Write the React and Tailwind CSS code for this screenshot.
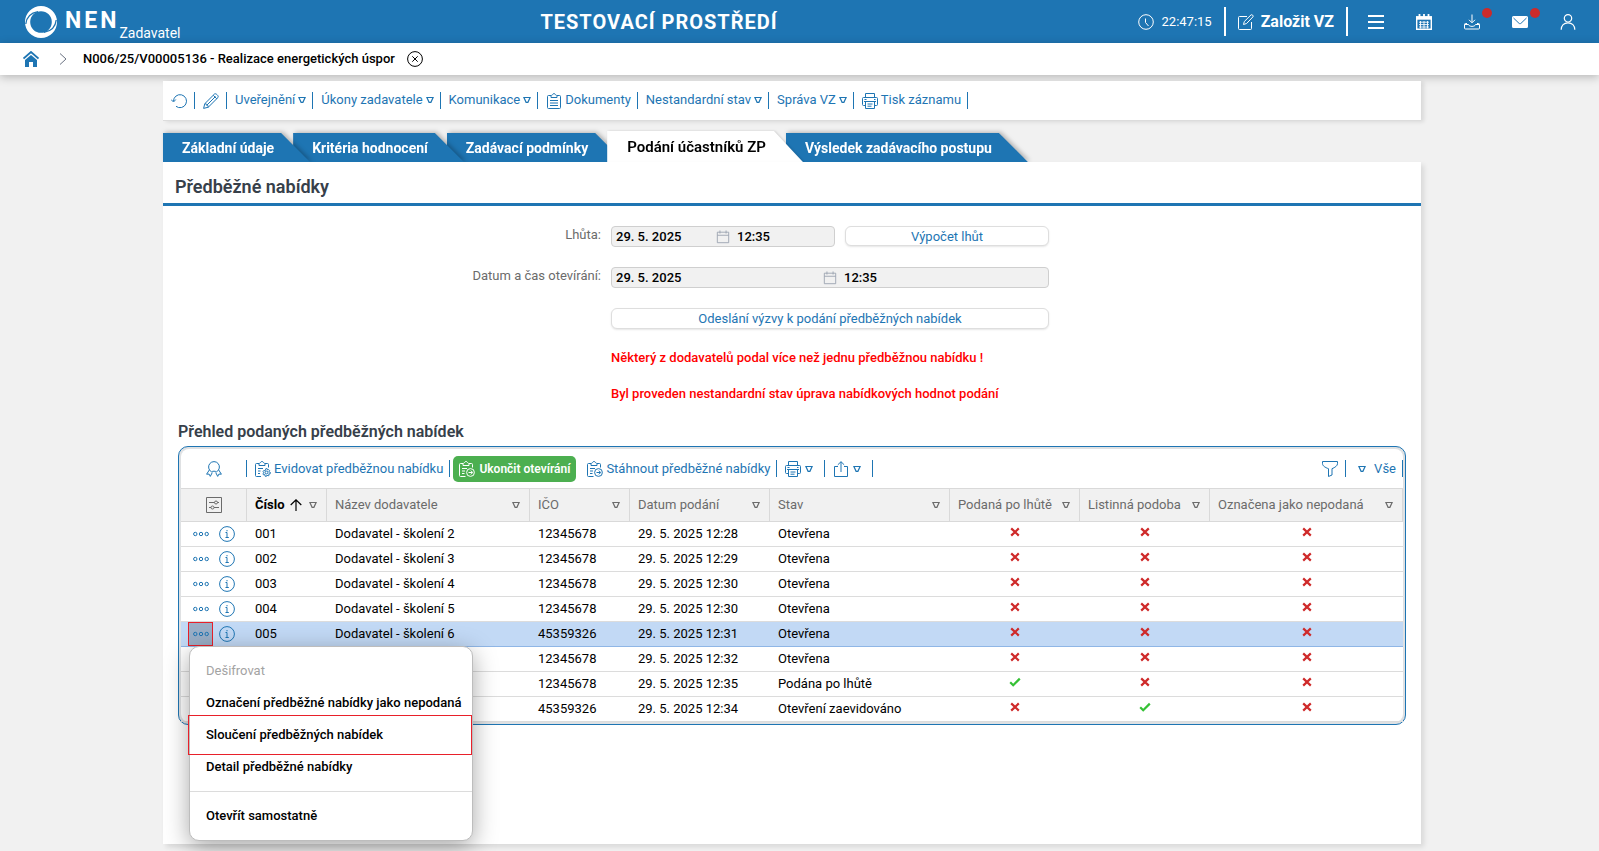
import { useState } from 'react';

const tabs = [
  { id: 'basic', label: 'Základní údaje', order: 'z-[5]' },
  { id: 'criteria', label: 'Kritéria hodnocení', order: 'z-[4]' },
  { id: 'terms', label: 'Zadávací podmínky', order: 'z-[3]' },
  { id: 'bids', label: 'Podání účastníků ZP', order: 'z-[2]' },
  { id: 'result', label: 'Výsledek zadávacího postupu', order: 'z-[1]' },
];

const actions = [
  { label: 'Uveřejnění', menu: true },
  { label: 'Úkony zadavatele', menu: true },
  { label: 'Komunikace', menu: true },
  { label: 'Dokumenty', icon: ClipboardIcon },
  { label: 'Nestandardní stav', menu: true },
  { label: 'Správa VZ', menu: true },
  { label: 'Tisk záznamu', icon: PrinterIcon },
];

const columns = [
  { label: 'Název dodavatele', width: 'w-[203px]' },
  { label: 'IČO', width: 'w-[100px]' },
  { label: 'Datum podání', width: 'w-[140px]' },
  { label: 'Stav', width: 'w-[180px]' },
  { label: 'Podaná po lhůtě', width: 'w-[130px]' },
  { label: 'Listinná podoba', width: 'w-[130px]' },
  { label: 'Označena jako nepodaná', width: '' },
];

const rows = [
  { no: '001', name: 'Dodavatel - školení 2', ico: '12345678', date: '29. 5. 2025 12:28', state: 'Otevřena', flags: [false, false, false] },
  { no: '002', name: 'Dodavatel - školení 3', ico: '12345678', date: '29. 5. 2025 12:29', state: 'Otevřena', flags: [false, false, false] },
  { no: '003', name: 'Dodavatel - školení 4', ico: '12345678', date: '29. 5. 2025 12:30', state: 'Otevřena', flags: [false, false, false] },
  { no: '004', name: 'Dodavatel - školení 5', ico: '12345678', date: '29. 5. 2025 12:30', state: 'Otevřena', flags: [false, false, false] },
  { no: '005', name: 'Dodavatel - školení 6', ico: '45359326', date: '29. 5. 2025 12:31', state: 'Otevřena', flags: [false, false, false] },
  { no: '', name: '', ico: '12345678', date: '29. 5. 2025 12:32', state: 'Otevřena', flags: [false, false, false] },
  { no: '', name: '', ico: '12345678', date: '29. 5. 2025 12:35', state: 'Podána po lhůtě', flags: [true, false, false] },
  { no: '', name: '', ico: '45359326', date: '29. 5. 2025 12:34', state: 'Otevření zaevidováno', flags: [false, true, false] },
];

function Icon({ children, className = 'size-4' }) {
  return (
    <svg viewBox="0 0 16 16" fill="none" stroke="currentColor" strokeWidth="1" className={`shrink-0 ${className}`} aria-hidden="true">
      {children}
    </svg>
  );
}

function Triangle({ className = '' }) {
  return (
    <svg viewBox="0 0 8 8" fill="none" stroke="currentColor" strokeWidth="1.2" className={`size-2 shrink-0 ${className}`} aria-hidden="true">
      <path d="M.9 1.5h6.2L4.900 6.300H3.100z" />
    </svg>
  );
}

function ClipboardIcon() {
  return (
    <Icon>
      <path d="M5 2.500H2.500a1 1 0 0 0-1 1v11a1 1 0 0 0 1 1h11a1 1 0 0 0 1-1v-11a1 1 0 0 0-1-1H11" />
      <path d="M5 4.500V2.800C5 2.300 6.500 2.300 6.800 1.400c.4-1.200 2-1.200 2.400 0C9.500 2.300 11 2.300 11 2.800v1.700zM4 7.500h8M4 10h8M4 12.500h8" />
    </Icon>
  );
}

function PrinterIcon() {
  return (
    <Icon>
      <path d="M3.500 4.500v-4h9v4M3.500 12.500h-2a1 1 0 0 1-1-1v-6a1 1 0 0 1 1-1h13a1 1 0 0 1 1 1v6a1 1 0 0 1-1 1h-2" />
      <path d="M3.500 8.500h9v7h-9zM2 8.500h12M5.500 11h5M5.500 13.200h4M2.500 6.500h2M12 6.500h1.500" />
    </Icon>
  );
}

function ClipboardGearIcon() {
  return (
    <Icon>
      <path d="M4 2.500H1.500a1 1 0 0 0-1 1v11a1 1 0 0 0 1 1H6M10 2.500h2.500a1 1 0 0 1 1 1v3M4 4.500V2.800c0-.5 1.200-.5 1.600-1.400.5-1.200 2.300-1.200 2.800 0 .4.900 1.600.9 1.600 1.400v1.700zM3 7.500h5M3 10h2.500M3 12.500h2" />
      <circle cx="11.500" cy="11.500" r="1.400" />
      <path d="M10.800 7.700h1.400l.3 1.300 1.200-.4 1 1.200-.9 1 1.700.7-.3 1.300-1.500.1.500 1.300-1.200.8-1-1-.7 1.500-1.300-.4v-1.500l-1.400.3-.7-1.200 1.200-1-1.200-1 .8-1.200 1.500.3z" strokeWidth=".9" />
    </Icon>
  );
}

function ClipboardArrowIcon() {
  return (
    <Icon>
      <path d="M4 2.500H1.500a1 1 0 0 0-1 1v11a1 1 0 0 0 1 1h5M10 2.500h2.500a1 1 0 0 1 1 1v3M4 4.500V2.800c0-.5 1.200-.5 1.600-1.400.5-1.200 2.300-1.200 2.800 0 .4.900 1.600.9 1.600 1.400v1.700zM3 7.500h5M3 10h3M3 12.500h2.500" />
      <circle cx="11.500" cy="11.500" r="3.900" />
      <path d="M9.500 11.500h4M11.800 9.600l1.900 1.900-1.900 1.900" />
    </Icon>
  );
}

function Mark({ value }) {
  return value ? (
    <svg viewBox="0 0 12 10" className="mx-auto mb-1 h-2.5 w-3" fill="none" stroke="#35c135" strokeWidth="2.200" role="img" aria-label="Ano">
      <path d="M1.200 5.200l3 3L10.800 1.600" />
    </svg>
  ) : (
    <svg viewBox="0 0 10 10" className="mx-auto mb-1 size-2.5" fill="none" stroke="#cf2a2a" strokeWidth="2.200" role="img" aria-label="Ne">
      <path d="M1.200 1.400l7.600 7.200M8.800 1.400L1.200 8.600" />
    </svg>
  );
}

function Separator() {
  return <span className="h-[17px] w-px shrink-0 bg-[#1e75b3]" />;
}

function Header() {
  return (
    <header className="flex h-[43px] shrink-0 items-center justify-between bg-[#1e75b3] pr-[7px] pl-[25px] text-white">
      <a href="#" className="flex h-full items-center">
        <svg viewBox="0 0 32 32" className="size-8 shrink-0" fill="currentColor" aria-hidden="true">
          <path fillRule="evenodd" d="M16 0a16 16 0 1 1 0 32a16 16 0 1 1 0-32zM16 5.200a10.800 10.800 0 1 0 0 21.600a10.800 10.800 0 1 0 0-21.600z" />
          <path d="M.8 18C1.500 11 6 6.800 13 5.600M31.200 14c-.7 7-5.200 11.200-12.200 12.400" fill="none" stroke="#1e75b3" strokeWidth="1.300" />
        </svg>
        <span className="ml-2 text-[23px] font-bold tracking-[3px]">NEN</span>
        <span className="self-end pb-0.5 text-sm leading-4">Zadavatel</span>
      </a>
      <h1 className="text-xl font-bold tracking-wider">TESTOVACÍ PROSTŘEDÍ</h1>
      <div className="flex items-center">
        <Icon>
          <circle cx="8" cy="8" r="7.300" />
          <path d="M7.500 4.500v4l3 3.500" />
        </Icon>
        <span className="ml-2 text-[13px]">22:47:15</span>
        <span className="ml-3 h-[29px] w-0.5 bg-white" />
        <button type="button" className="mx-3 flex items-center gap-[7px] text-base font-bold">
          <Icon>
            <path d="M9 2.500H1.500a1 1 0 0 0-1 1v11a1 1 0 0 0 1 1h11a1 1 0 0 0 1-1V8M5.500 10.500l.8-3L13 .9c.8-.8 2.800.8 2 1.900L8.600 9.500z" />
          </Icon>
          Založit VZ
        </button>
        <span className="mr-1 h-[29px] w-0.5 bg-white" />
        <button type="button" aria-label="Menu" className="flex h-8 w-12 items-center justify-center">
          <Icon>
            <path d="M0 2h16M0 8h16M0 14h16" strokeWidth="2" />
          </Icon>
        </button>
        <button type="button" aria-label="Kalendář" className="flex h-8 w-12 items-center justify-center">
          <Icon>
            <path d="M.7 3h14.600v12.300H.7z" strokeWidth="1.400" />
            <path d="M0 2.300h16v3.400H0z" fill="currentColor" stroke="none" />
            <path d="M3.500 0v4M8 0v4M12.500 0v4" strokeWidth="1.800" />
            <path d="M3 8.200h10M3 10.600h10M3 13h10M4.500 7v7.500M8 7v7.500M11.500 7v7.500" strokeWidth=".9" />
          </Icon>
        </button>
        <button type="button" aria-label="Stažené soubory" className="relative flex h-8 w-12 items-center justify-center">
          <Icon>
            <path d="M8 .5v8M5 5.800l3 3 3-3M3 9.500H1.500a1 1 0 0 0-1 1v3.500a1 1 0 0 0 1 1h13a1 1 0 0 0 1-1v-3.500a1 1 0 0 0-1-1H13M.7 10.500h3.800c.5 2.500 6.500 2.500 7 0h3.800" />
          </Icon>
          <span className="absolute top-0.5 right-1 size-2.5 rounded-full bg-[#cb2b2b]" />
        </button>
        <button type="button" aria-label="Zprávy" className="relative flex h-8 w-12 items-center justify-center">
          <Icon>
            <path d="M1.500 2h13a1.500 1.500 0 0 1 1.500 1.500v9a1.500 1.500 0 0 1-1.500 1.500h-13A1.500 1.500 0 0 1 0 12.500v-9A1.500 1.500 0 0 1 1.500 2z" fill="currentColor" stroke="none" />
            <path d="M1.500 4l5.500 5.300c.6.500 1.400.5 2 0L14.500 4" stroke="#1e75b3" />
          </Icon>
          <span className="absolute top-0.5 right-1 size-2.5 rounded-full bg-[#cb2b2b]" />
        </button>
        <button type="button" aria-label="Uživatel" className="flex h-8 w-12 items-center justify-center">
          <Icon>
            <circle cx="8" cy="4.300" r="3.700" strokeWidth="1.200" />
            <path d="M1.200 15.800c0-4.300 2.800-7 6.800-7s6.800 2.700 6.800 7" strokeWidth="1.200" />
          </Icon>
        </button>
      </div>
    </header>
  );
}

function Breadcrumb() {
  return (
    <nav className="flex h-8 shrink-0 items-center bg-white pl-[23px] shadow-[0_2px_10px_rgba(0,0,0,0.25)]">
      <a href="#" aria-label="Domů" className="text-[#1e75b3]">
        <Icon>
          <path d="M.5 7.500L8 1l7.500 6.500" strokeWidth="1.800" />
          <path d="M8 4L2 9v7h4v-5h4v5h4V9z" fill="currentColor" stroke="none" />
        </Icon>
      </a>
      <svg viewBox="0 0 8 14" className="ml-5 h-3.5 w-2 text-gray-500" fill="none" stroke="currentColor" aria-hidden="true">
        <path d="M1 1.500L7 7l-6 5.500" />
      </svg>
      <span className="ml-4 text-[13px] font-medium text-black">N006/25/V00005136 - Realizace energetických úspor</span>
      <button type="button" aria-label="Zavřít záznam" className="ml-3 text-black">
        <Icon>
          <circle cx="8" cy="8" r="7.400" />
          <path d="M5.300 5.300l5.400 5.400M10.700 5.300l-5.400 5.400" />
        </Icon>
      </button>
    </nav>
  );
}

function Toolbar() {
  return (
    <div className="flex h-10 items-center border-b border-[#dcdcdc] bg-white pl-2 text-[13px] text-[#1e75b3] shadow-[3px_1px_4px_rgba(0,0,0,0.1)]">
      <button type="button" aria-label="Obnovit" className="mr-[7px]">
        <Icon>
          <path d="M2.500 8A6.500 6.500 0 1 1 5 13.300M0 6.500L2.500 9l2.300-2.500" />
        </Icon>
      </button>
      <Separator />
      <button type="button" aria-label="Upravit" className="mr-[7px] ml-2">
        <Icon>
          <path d="M.6 15.400l1.200-4.700L11.500 1c1.200-1.200 4.700 2.100 3.500 3.500l-9.700 9.700zM1.800 10.700c1.800.1 3.400 1.600 3.500 3.500M10.300 2.300l3.500 3.500M12.500 3.500l-9 9" />
        </Icon>
      </button>
      <Separator />
      {actions.map(({ label, menu, icon: ActionIcon }) => (
        <div key={label} className="flex items-center">
          <button type="button" className="mr-1.5 ml-2 flex items-center gap-[3px]">
            {ActionIcon && <ActionIcon />}
            <span className="flex items-center gap-[3px] pb-0.5">
              {label}
              {menu && <Triangle />}
            </span>
          </button>
          <Separator />
        </div>
      ))}
    </div>
  );
}

function Tabs({ active, onChange }) {
  return (
    <div role="tablist" className="mt-2.5 flex h-[31px] items-end">
      {tabs.map(({ id, label, order }) => {
        const selected = id === active;
        return (
          <div
            key={id}
            className={`relative -mr-[17px] ${selected ? 'z-10 drop-shadow-[1px_0_1px_rgba(0,0,0,0.15)]' : `drop-shadow-[2px_-1px_2px_rgba(0,0,0,0.25)] ${order}`}`}
          >
            <button
              type="button"
              role="tab"
              aria-selected={selected}
              onClick={() => onChange(id)}
              className={`block [clip-path:polygon(0_0,calc(100%-29px)_0,100%_100%,0_100%)] ${
                selected ? 'h-[31px] bg-white pt-0.5 pr-[37px] pl-5 text-[15px] font-semibold text-black' : 'h-[29px] bg-[#1e75b3] pr-9 pl-[19px] text-sm font-bold text-white'
              }`}
            >
              {label}
            </button>
          </div>
        );
      })}
    </div>
  );
}

function DateTimeField({ id, date, time, className }) {
  return (
    <div className={`flex h-[21px] items-center rounded-sm border border-[#cfcfcf] bg-[#f1f1f1] text-[13px] font-medium text-black ${className}`}>
      <input id={id} readOnly defaultValue={date} className="w-0 min-w-0 flex-1 pl-1 outline-none" />
      <Icon className="ml-[3px] size-3.5 text-gray-400">
        <path d="M1.500 2.500h13v12h-13zM1.500 6h13M4.500 .5v3.500M11.500 .5v3.500" />
      </Icon>
      <input aria-label="Čas" readOnly defaultValue={time} className="w-0 min-w-0 flex-1 pl-[7px] outline-none" />
    </div>
  );
}

function BidForm() {
  const buttonStyle = 'rounded-md border border-[#dedede] bg-white text-[13px] text-[#1e75b3] shadow-[0_1px_2px_rgba(0,0,0,0.1)]';
  return (
    <form className="grid grid-cols-[438px_438px] gap-x-2.5 pt-5 text-[13px] text-[#6b6b6b]">
      <label htmlFor="deadline" className="text-right leading-[18px]">Lhůta:</label>
      <div className="flex gap-2.5">
        <DateTimeField id="deadline" date="29. 5. 2025" time="12:35" className="w-56" />
        <button type="button" className={`h-5 flex-1 ${buttonStyle}`}>Výpočet lhůt</button>
      </div>
      <label htmlFor="opening" className="mt-5 text-right leading-[18px]">Datum a čas otevírání:</label>
      <DateTimeField id="opening" date="29. 5. 2025" time="12:35" className="mt-5" />
      <button type="button" className={`col-start-2 mt-5 h-[21px] ${buttonStyle}`}>Odeslání výzvy k podání předběžných nabídek</button>
      <p className="col-start-2 mt-5 leading-[18px] font-medium text-[#ff0000]">Některý z dodavatelů podal více než jednu předběžnou nabídku !</p>
      <p className="col-start-2 mt-[18px] leading-[18px] font-medium text-[#ff0000]">Byl proveden nestandardní stav úprava nabídkových hodnot podání</p>
    </form>
  );
}

function RowMenu() {
  const item = 'block h-8 w-full px-4 text-left whitespace-nowrap';
  return (
    <div role="menu" className="absolute top-full left-2 z-20 w-[284px] rounded-[10px] border border-[#bdbdbd] bg-white py-2 text-[13px] font-medium text-black shadow-[0_6px_24px_rgba(0,0,0,0.35)]">
      <button type="button" role="menuitem" disabled className={`${item} font-normal text-[#a3a3a3]`}>Dešifrovat</button>
      <button type="button" role="menuitem" className={item}>Označení předběžné nabídky jako nepodaná</button>
      <div className="relative">
        <button type="button" role="menuitem" className={item}>Sloučení předběžných nabídek</button>
        <span className="pointer-events-none absolute -inset-y-1 right-0 -left-0.5 border border-[#e8202a]" />
      </div>
      <button type="button" role="menuitem" className={item}>Detail předběžné nabídky</button>
      <hr className="my-2 border-[#dcdcdc]" />
      <button type="button" role="menuitem" className={item}>Otevřít samostatně</button>
    </div>
  );
}

function GridToolbar() {
  return (
    <div className="flex h-[39px] items-center text-[13px] text-[#1e75b3]">
      <button type="button" aria-label="Certifikát" className="flex w-[65px] justify-center">
        <Icon>
          <path d="M5.500 10.800a5.400 5.400 0 1 1 5 0M5.500 10.800c.8-.4 1.500-.6 2.500-.6s1.700.2 2.500.6" />
          <path d="M3.300 9L.6 13.200l2.500-.1 1.200 2.300 2-3.900M12.700 9l2.700 4.200-2.500-.1-1.200 2.300-2-3.900" />
        </Icon>
      </button>
      <Separator />
      <button type="button" className="mr-1.5 ml-2 flex items-center gap-[3px]">
        <ClipboardGearIcon />
        Evidovat předběžnou nabídku
      </button>
      <Separator />
      <button type="button" className="ml-[3px] flex h-[26px] items-center gap-1 rounded-[5px] bg-[#4caf50] px-1.5 text-xs font-semibold text-white">
        <ClipboardArrowIcon />
        Ukončit otevírání
      </button>
      <button type="button" className="mr-1.5 ml-[11px] flex items-center gap-[3px]">
        <ClipboardArrowIcon />
        Stáhnout předběžné nabídky
      </button>
      <Separator />
      <button type="button" aria-label="Tisk" className="mr-[11px] ml-2 flex items-center gap-1">
        <PrinterIcon />
        <Triangle />
      </button>
      <Separator />
      <button type="button" aria-label="Export" className="mr-[11px] ml-2 flex items-center gap-1">
        <Icon>
          <path d="M5 5.500H1.500v10h13v-10H11M8 11V.8M4.800 3.800L8 .7l3.200 3.100" />
        </Icon>
        <Triangle />
      </button>
      <Separator />
      <button type="button" aria-label="Filtr" className="mr-[7px] ml-auto">
        <Icon>
          <path d="M.5 .5h15v2.200c0 2-2.500 3.800-5.500 5V14l-3.500 1.500V7.700C3 6.500.5 4.700.5 2.700z" />
        </Icon>
      </button>
      <Separator />
      <button type="button" className="mr-1.5 ml-3 flex items-center gap-2">
        <Triangle />
        Vše
      </button>
      <Separator />
    </div>
  );
}

function BidsTable() {
  const [openRow, setOpenRow] = useState(4);
  return (
    <div className="rounded-[10px] border border-[#1e75b3] bg-[#dfe1e3] p-0.5">
      <div className="rounded-lg bg-white">
        <GridToolbar />
        <table className="w-full table-fixed border-separate border-spacing-0 text-[13px]">
          <thead>
            <tr className="h-[34px] bg-[#f1f1f1] text-left text-[#6b6b6b] [&>th]:border-y [&>th]:border-r [&>th]:border-[#d9d9d9] [&>th]:p-0 [&>th]:font-normal">
              <th className="w-[66px]">
                <button type="button" aria-label="Nastavení sloupců" className="mx-auto block">
                  <Icon>
                    <path d="M.5 .5h15v15H.5zM3 5.500h5.500M11.500 5.500h1.500M3 10.500h2M8 10.500h5" />
                    <circle cx="10" cy="5.500" r="1.500" />
                    <circle cx="6.500" cy="10.500" r="1.500" />
                  </Icon>
                </button>
              </th>
              <th className="w-20">
                <div className="flex items-center pr-[9px] pl-2">
                  <span className="font-bold text-black">Číslo</span>
                  <svg viewBox="0 0 12 12" className="ml-[5px] size-3 text-black" fill="none" stroke="currentColor" strokeWidth="1.200" aria-hidden="true">
                    <path d="M6 12V1M.7 6L6 .8 11.300 6" />
                  </svg>
                  <Triangle className="ml-auto" />
                </div>
              </th>
              {columns.map(({ label, width }) => (
                <th key={label} className={width}>
                  <div className="flex items-center justify-between pr-[9px] pl-2 whitespace-nowrap">
                    {label}
                    <Triangle />
                  </div>
                </th>
              ))}
            </tr>
          </thead>
          <tbody className="text-black">
            {rows.map(({ no, name, ico, date, state, flags }, index) => {
              const selected = index === openRow;
              return (
                <tr
                  key={date + state}
                  className={`h-[25px] [&>td]:border-b [&>td]:py-0 ${selected ? 'bg-[#c2d9f5] [&>td]:border-[#8fb6e6]' : '[&>td]:border-[#dcdcdc]'}`}
                >
                  <td className="relative pl-[7px]">
                    <div className="flex items-center gap-1.5 text-[#1e75b3]">
                      <button
                        type="button"
                        aria-label="Akce"
                        onClick={() => setOpenRow(index)}
                        className={`flex h-6 w-[25px] items-center justify-center ${selected ? 'border border-[#e8202a] bg-[#9aaec6]' : ''}`}
                      >
                        <Icon>
                          <circle cx="2.300" cy="8" r="1.700" />
                          <circle cx="8" cy="8" r="1.700" />
                          <circle cx="13.700" cy="8" r="1.700" />
                        </Icon>
                      </button>
                      <button type="button" aria-label="Informace">
                        <Icon>
                          <circle cx="8" cy="8" r="7.400" />
                          <path d="M6.500 6.500H8v5M6.500 11.500h3.300M8 4v1.300" />
                        </Icon>
                      </button>
                    </div>
                    {selected && <RowMenu />}
                  </td>
                  <td className="pl-2">{no}</td>
                  <td className="pl-2">{name}</td>
                  <td className="pl-2">{ico}</td>
                  <td className="pl-2">{date}</td>
                  <td className="pl-2">{state}</td>
                  {flags.map((flag, i) => (
                    <td key={i} className="px-0">
                      <Mark value={flag} />
                    </td>
                  ))}
                </tr>
              );
            })}
          </tbody>
        </table>
      </div>
    </div>
  );
}

export default function App() {
  const [activeTab, setActiveTab] = useState('bids');
  return (
    <div className="flex min-h-screen flex-col bg-[#f1f1f1] font-[Roboto,sans-serif]">
      <Header />
      <Breadcrumb />
      <div className="flex flex-1 flex-col pt-1.5 pr-[15px] pb-[7px]">
        <main className="mx-auto flex w-full max-w-[1258px] flex-1 flex-col">
          <Toolbar />
          <Tabs active={activeTab} onChange={setActiveTab} />
          <section className="relative z-10 flex-1 bg-white shadow-[3px_3px_5px_rgba(0,0,0,0.1)]">
            <h2 className="flex h-11 items-center border-b-3 border-[#1e75b3] px-3 pt-2 text-lg font-semibold text-[#37404a]">Předběžné nabídky</h2>
            <BidForm />
            <div className="px-[15px] pt-[17px]">
              <h3 className="mb-0.5 text-base font-semibold text-[#37404a]">Přehled podaných předběžných nabídek</h3>
              <BidsTable />
            </div>
          </section>
        </main>
      </div>
    </div>
  );
}
